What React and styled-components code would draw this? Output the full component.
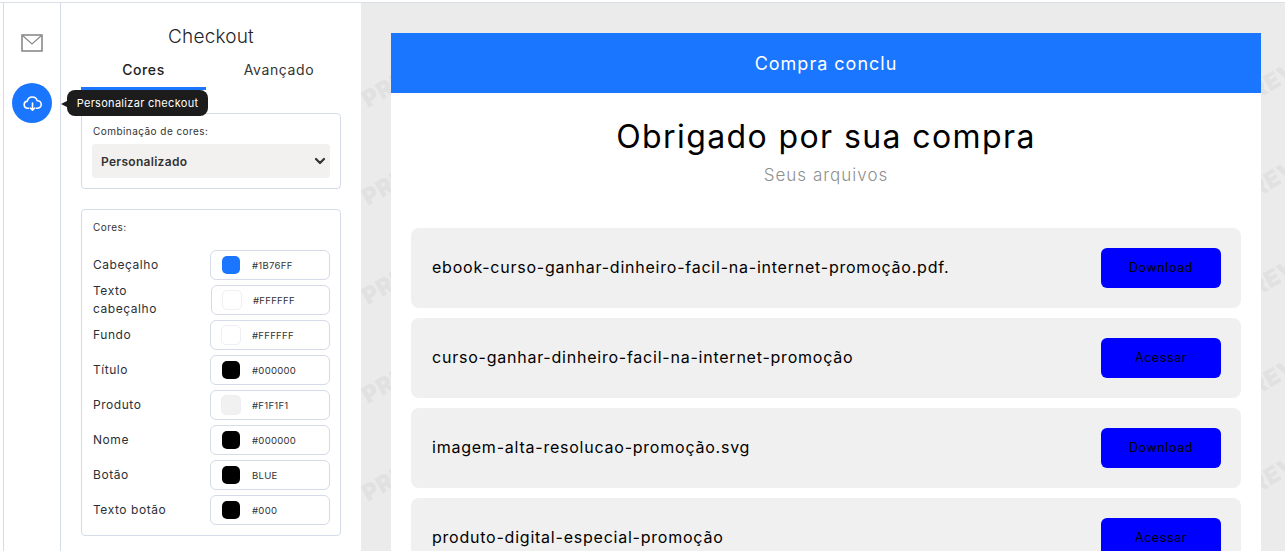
import React from "react";
import styled, { createGlobalStyle } from "styled-components";

const Global = createGlobalStyle`
  html, body { margin: 0; padding: 0; height: 100%; overflow: hidden; background: #fff; }
  body { font-family: Inter, "Liberation Sans", sans-serif; }
  * { box-sizing: border-box; }
`;
const Page = styled.div`
  width: 1285px; height: 549px; overflow: hidden; display: flex;
  border-top: 1px solid #dadfea; margin-top: 2px; background: #fff;
`;
const Gutter = styled.div`width: 4px; flex: none; border-right: 1px solid #d5dbe8;`;
const Rail = styled.nav`
  width: 57px; flex: none; border-right: 1px solid #d5dbe8; display: flex; flex-direction: column;
  align-items: center; padding-top: 23px; gap: 24px; position: relative;
`;
const RailIcon = styled.div`height: 33px; display: flex; align-items: center; justify-content: center;`;
const RoundBtn = styled.div`
  width: 40px; height: 40px; border-radius: 50%; background: #1b76ff; display: flex; align-items: center; justify-content: center;
`;
const Tip = styled.div`
  position: absolute; left: 63px; top: 87px; white-space: nowrap; height: 26px; line-height: 26px; width: 141px; text-align: center;
  background: #1c1c1c; color: #fff; font-size: 11px; letter-spacing: .3px; border-radius: 8px; z-index: 5;
  &::before { content: ""; position: absolute; left: -6px; top: 11px; border: 3px solid transparent; border-right: 6px solid #1c1c1c; border-left: 0; }
`;
const Side = styled.aside`
  width: 300px; flex: none; padding: 0 20px; position: relative; color: #222;
`;
const Title = styled.h2`
  margin: 22px 0 0; font-size: 19px; font-weight: 300; letter-spacing: .2px; text-align: center; line-height: 24px; color: #1f2328;
`;
const Tabs = styled.div`display: flex; height: 41px; width: 271px;`;
const Tab = styled.div`
  flex: ${p => p.$on ? "0 0 125px" : "1"}; text-align: center; font-size: 14px; letter-spacing: .6px; line-height: 20px; padding-top: 11px;
  font-weight: ${p => p.$on ? 500 : 400}; color: ${p => p.$on ? "#222" : "#333"};
  border-bottom: ${p => p.$on ? "3px solid #1b76ff" : "3px solid transparent"};
`;
const Card = styled.section`
  border: 1px solid #d5dbe8; border-radius: 4px; width: 260px; padding: 10px;
`;
const ComboCard = styled(Card)`margin-top: 23px; height: 76px;`;
const Legend = styled.div`font-size: 10px; letter-spacing: .45px; line-height: 14px; color: #333; padding-left: 1px;`;
const SelectBox = styled.div`
  margin-top: 6px; height: 34px; background: #f2f1ef; border-radius: 3px; display: flex; align-items: center; justify-content: space-between;
  padding: 0 3px 0 9px; font-size: 12px; letter-spacing: .3px; font-weight: 600; color: #333;
`;
const ColorCard = styled(Card)`margin-top: 20px; height: 327px;`;
const Rows = styled.div`display: flex; flex-direction: column; gap: 5px; margin-top: 16px;`;
const Row = styled.div`display: flex; align-items: center; height: 30px; justify-content: space-between;`;
const RowLabel = styled.div`font-size: 12px; letter-spacing: .55px; line-height: 18px; color: #2b2f36; width: 90px; padding-left: 1px;`;
const Field = styled.div`
  width: ${p => p.$narrow ? 119 : 120}px; height: 30px; border: 1px solid #d5dbe8; border-radius: 6px; display: flex; align-items: center; padding-left: 11px; gap: 12px;
  font-size: 9.6px; letter-spacing: .25px; color: #333; flex: none;
`;
const Swatch = styled.span`
  width: ${p => p.$light ? 20 : 18}px; height: ${p => p.$light ? 20 : 18}px; border-radius: 5px; background: ${p => p.$c}; flex: none;
  margin: 0 ${p => p.$light ? -1 : 0}px;
  border: ${p => p.$light ? "1px solid #eeeff3" : "0"};
`;
const Preview = styled.main`
  flex: 1; background: #ebebeb; padding: 30px 24px 0 30px; position: relative; overflow: hidden;
`;
const Mark = styled.span`
  position: absolute; left: ${p => p.$x}px; top: ${p => p.$y}px; font-size: 23px; line-height: 26px; font-weight: 900; color: #e1e1e1;
  transform: rotate(-30deg); transform-origin: left center; letter-spacing: 1px;
`;
const Sheet = styled.div`background: #fff; width: 870px; position: relative; z-index: 1; height: 600px;`;
const Banner = styled.div`
  height: 60px; background: #1b76ff; color: #fff; text-align: center; line-height: 61px; font-size: 18px; letter-spacing: 1px;
`;
const Heading = styled.h1`
  margin: 25px 0 0; font-size: 32px; letter-spacing: 1.4px; font-weight: 400; color: #000; text-align: center; line-height: 38px;
`;
const Sub = styled.p`
  margin: 7px 0 0; font-size: 17px; letter-spacing: 1px; font-weight: 300; color: #8f8f8f; text-align: center; line-height: 25px;
`;
const List = styled.div`display: flex; flex-direction: column; gap: 10px; padding: 0 20px; margin-top: 40px;`;
const Item = styled.div`
  height: 80px; background: #f0f0f0; border-radius: 8px; display: flex; align-items: center; justify-content: space-between; padding: 0 20px 0 21px;
`;
const ItemName = styled.span`font-size: 16px; letter-spacing: .77px; color: #000; font-weight: 400; padding-bottom: 2px;`;
const Action = styled.button`
  width: 120px; height: 40px; border: 0; border-radius: 6px; background: #0000ff; color: #000; font: inherit; font-size: 12.5px; letter-spacing: .6px; padding: 0 0 1px;
`;

const Mail = () => (
  <svg width="22" height="18" viewBox="0 0 22 18" fill="none" stroke="#8a8a8a" strokeWidth="1.6">
    <rect x="1" y="1" width="20" height="16" />
    <path d="M1.5 1.5 11 10l9.5-8.5" strokeWidth="1.2" />
  </svg>
);
const Cloud = () => (
  <svg width="19" height="19" viewBox="0 0 24 24" fill="none" stroke="#fff" strokeWidth="2" strokeLinecap="round" strokeLinejoin="round">
    <path d="M7 18H6a4.5 4.5 0 0 1-.6-8.96A6.5 6.5 0 0 1 18 8.5a4.5 4.5 0 0 1 .5 9.5H17" />
    <path d="M12 11.5v9M9.2 17.7l2.8 2.8 2.8-2.8" />
  </svg>
);
const Chevron = () => (
  <svg width="14" height="14" viewBox="0 0 14 14" fill="none" stroke="#333" strokeWidth="2.2" strokeLinecap="round" strokeLinejoin="round">
    <path d="M3 5l4 4 4-4" />
  </svg>
);

const colors = [
  ["Cabeçalho", "#1B76FF", "#1b76ff"],
  ["Texto cabeçalho", "#FFFFFF", "#fff", true, true],
  ["Fundo", "#FFFFFF", "#fff", true],
  ["Título", "#000000", "#000"],
  ["Produto", "#F1F1F1", "#f1f1f1", true],
  ["Nome", "#000000", "#000"],
  ["Botão", "BLUE", "#000"],
  ["Texto botão", "#000", "#000"],
];
const items = [
  ["ebook-curso-ganhar-dinheiro-facil-na-internet-promoção.pdf.", "Download"],
  ["curso-ganhar-dinheiro-facil-na-internet-promoção", "Acessar"],
  ["imagem-alta-resolucao-promoção.svg", "Download"],
  ["produto-digital-especial-promoção", "Acessar"],
];
const rows = [85, 183, 282, 381, 479];
const marks = rows.flatMap(y => [[3, y], [877, y]]);

export default function App() {
  return (
    <Page>
      <Global />
      <Gutter />
      <Rail>
        <RailIcon><Mail /></RailIcon>
        <RoundBtn><Cloud /></RoundBtn>
        <Tip>Personalizar checkout</Tip>
      </Rail>
      <Side>
        <Title>Checkout</Title>
        <Tabs>
          <Tab $on>Cores</Tab>
          <Tab>Avançado</Tab>
        </Tabs>
        <ComboCard>
          <Legend>Combinação de cores:</Legend>
          <SelectBox>Personalizado <Chevron /></SelectBox>
        </ComboCard>
        <ColorCard>
          <Legend>Cores:</Legend>
          <Rows>
            {colors.map(([l, v, c, light, narrow]) => (
              <Row key={l}>
                <RowLabel>{l}</RowLabel>
                <Field $narrow={narrow}><Swatch $c={c} $light={light} />{v}</Field>
              </Row>
            ))}
          </Rows>
        </ColorCard>
      </Side>
      <Preview>
        {marks.map(([x, y], i) => <Mark key={i} $x={x} $y={y}>PREVIEW</Mark>)}
        <Sheet>
          <Banner>Compra conclu</Banner>
          <Heading>Obrigado por sua compra</Heading>
          <Sub>Seus arquivos</Sub>
          <List>
            {items.map(([n, a]) => (
              <Item key={n}><ItemName>{n}</ItemName><Action>{a}</Action></Item>
            ))}
          </List>
        </Sheet>
      </Preview>
    </Page>
  );
}
